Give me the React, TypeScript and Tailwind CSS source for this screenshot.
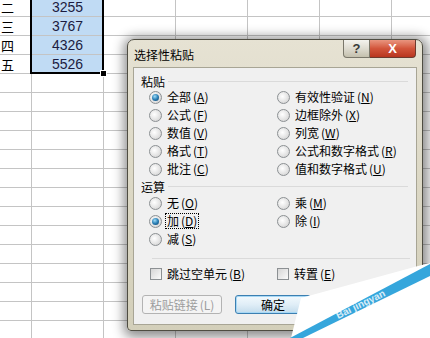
import type { ReactNode } from 'react'

const ui = { fontFamily: '"Noto Sans CJK SC", "Liberation Sans", sans-serif' }

const rows = [
  { a: '二', b: '3255' },
  { a: '三', b: '3767' },
  { a: '四', b: '4326' },
  { a: '五', b: '5526' },
]

function Sheet() {
  const list = Array.from({ length: 18 }, (_, i) => rows[i])
  return (
    <div className="-mt-[2px] flex flex-col">
      {list.map((r, i) => (
        <div key={i} className="flex h-[19px] shrink-0 border-b border-[#c4c4c4]">
          <div className="flex w-[32px] shrink-0 items-end border-r border-[#c4c4c4]">
            {r && (
              <span className="pb-[1px] pl-[1px] text-[13px] leading-[14px] text-black" style={ui}>
                {r.a}
              </span>
            )}
          </div>
          <div
            className={`flex w-[72px] shrink-0 items-end justify-center border-r ${
              r ? 'border-[#c0dbf4] bg-[#c0dbf4]' : 'border-[#c4c4c4]'
            }`}
          >
            {r && (
              <span className="pb-[1px] font-['Liberation_Sans'] text-[14px] leading-[15px] text-[#1c1c40]">
                {r.b}
              </span>
            )}
          </div>
          {[0, 1, 2, 3, 4].map((c) => (
            <div key={c} className="w-[72px] shrink-0 border-r border-[#c4c4c4]" />
          ))}
        </div>
      ))}
    </div>
  )
}

function Radio({ checked }: { checked?: boolean }) {
  return (
    <span className="flex h-[13px] w-[13px] shrink-0 items-center justify-center rounded-full border border-[#8c9093] bg-[radial-gradient(circle_at_40%_40%,#ffffff,#e4e4e4_55%,#c9c9c9)]">
      {checked && (
        <span className="h-[7px] w-[7px] rounded-full bg-[radial-gradient(circle_at_40%_35%,#9fdcf8,#2a7fb5_50%,#0e3d66)]" />
      )}
    </span>
  )
}

function Check() {
  return (
    <span className="h-[12px] w-[12px] shrink-0 border border-[#8c9093] bg-linear-to-br from-[#d6d6d6] to-[#fbfbfb]" />
  )
}

function Label({ text, k }: { text: string; k: string }) {
  return (
    <>
      {text}
      <span className="ml-[2px]">
        (<u>{k}</u>)
      </span>
    </>
  )
}

function Opt({ text, k, checked, focus }: { text: string; k: string; checked?: boolean; focus?: boolean }) {
  return (
    <div className="flex h-[18px] items-center gap-[5px]">
      <Radio checked={checked} />
      <span className={focus ? 'outline-1 outline-dotted outline-black px-[1px] -ml-[1px] leading-[14px]' : ''}>
        <Label text={text} k={k} />
      </span>
    </div>
  )
}

function Group({ title, children }: { title: string; children: ReactNode }) {
  return (
    <div className="flex flex-col">
      <div className="flex h-[15px] items-center gap-[3px] pl-[7px] pr-[8px]">
        <span>{title}</span>
        <span className="h-[1px] flex-1 bg-[#dadada]" />
      </div>
      {children}
    </div>
  )
}

function Dialog() {
  return (
    <div
      className="absolute left-[127px] top-[39px] flex h-[292px] w-[296px] flex-col rounded-t-[7px] rounded-b-[4px] border border-[#4f4d42] bg-linear-to-b from-[#e6e2d3] via-[#dcd8c5] to-[#d3cfba] shadow-[1px_2px_12px_4px_rgba(0,0,0,0.45)]"
      style={ui}
    >
      <div className="flex h-[27px] shrink-0 items-start justify-between pl-[6px] pr-[6px]">
        <span className="mt-[8px] text-[12px] leading-[14px] text-black">选择性粘贴</span>
        <div className="flex">
          <div className="flex h-[18px] w-[27px] items-center justify-center rounded-bl-[4px] border border-t-0 border-[#7a776a] bg-linear-to-b from-[#f4f3ee] via-[#dedbd0] to-[#c4c0ad] font-['Liberation_Sans'] text-[13px] font-bold text-[#3a3a3a]">
            ?
          </div>
          <div className="flex h-[18px] w-[46px] items-center justify-center rounded-br-[4px] border border-l-0 border-t-0 border-[#6d3a2e] bg-linear-to-b from-[#e9957f] via-[#d2553b] to-[#b8351f] font-['Liberation_Sans'] text-[13px] font-bold text-white">
            X
          </div>
        </div>
      </div>
      <div className="mx-[5px] flex h-[258px] flex-col border border-[#a8a595] bg-[#f0f0f0] text-[12px] leading-[14px] text-black">
        <div className="pt-[6px]">
          <Group title="粘贴">
            <div className="mt-[-1px] grid grid-cols-[128px_1fr] pl-[15px]">
              <div className="flex flex-col">
                <Opt text="全部" k="A" checked />
                <Opt text="公式" k="F" />
                <Opt text="数值" k="V" />
                <Opt text="格式" k="T" />
                <Opt text="批注" k="C" />
              </div>
              <div className="flex flex-col">
                <Opt text="有效性验证" k="N" />
                <Opt text="边框除外" k="X" />
                <Opt text="列宽" k="W" />
                <Opt text="公式和数字格式" k="R" />
                <Opt text="值和数字格式" k="U" />
              </div>
            </div>
          </Group>
        </div>
        <div className="mt-[1px]">
          <Group title="运算">
            <div className="grid grid-cols-[128px_1fr] pl-[15px]">
              <div className="flex flex-col">
                <Opt text="无" k="O" />
                <Opt text="加" k="D" checked focus />
                <Opt text="减" k="S" />
              </div>
              <div className="flex flex-col">
                <Opt text="乘" k="M" />
                <Opt text="除" k="I" />
              </div>
            </div>
          </Group>
        </div>
        <div className="ml-[18px] mr-[6px] mt-[10px] h-[1px] bg-[#dadada]" />
        <div className="mt-[6px] grid h-[18px] grid-cols-[127px_1fr] pl-[16px]">
          <div className="flex items-center gap-[5px]">
            <Check />
            <span>
              <Label text="跳过空单元" k="B" />
            </span>
          </div>
          <div className="flex items-center gap-[5px]">
            <Check />
            <span>
              <Label text="转置" k="E" />
            </span>
          </div>
        </div>
        <div className="mt-[12px] flex gap-[13px] pl-[8px]">
          <div className="flex h-[19px] w-[80px] items-center justify-center rounded-[3px] border border-[#b3b3b3] bg-[#f4f4f4] text-[#9d9d9d]">
            粘贴链接<span className="ml-[2px]">(L)</span>
          </div>
          <div className="flex h-[19px] w-[76px] items-center justify-center rounded-[3px] border border-[#3c7fb1] bg-linear-to-b from-[#f2f9fd] via-[#e0eef7] to-[#c3dcec] shadow-[inset_0_0_0_1px_#a7d8f5]">
            确定
          </div>
          <div className="flex h-[19px] w-[76px] items-center justify-center rounded-[3px] border border-[#707070] bg-linear-to-b from-[#f2f2f2] to-[#d4d4d4]">
            取消
          </div>
        </div>
      </div>
    </div>
  )
}

function Watermark() {
  return (
    <svg className="pointer-events-none absolute left-0 top-0" width="430" height="338" viewBox="0 0 430 338">
      <polygon points="291,338 301,298 418,266 430,263 430,338" fill="#ffffff" />
      <polygon points="290,338 303,338 430,276 430,264" fill="#35a6dc" />
      <text
        x="338"
        y="319"
        fill="#ffffff"
        fontSize="10"
        fontFamily="Liberation Sans, sans-serif"
        fontWeight="bold"
        transform="rotate(-26 338 319)"
        opacity="0.8"
      >
        Bai  jingyan
      </text>
    </svg>
  )
}

export default function App() {
  return (
    <div className="relative h-[338px] w-[430px] overflow-hidden bg-white">
      <Sheet />
      <div className="absolute left-[30px] top-[-4px] h-[78px] w-[74px] border-2 border-black" />
      <div className="absolute left-[100px] top-[70px] h-[7px] w-[7px] border border-white bg-black" />
      <Dialog />
      <Watermark />
    </div>
  )
}
